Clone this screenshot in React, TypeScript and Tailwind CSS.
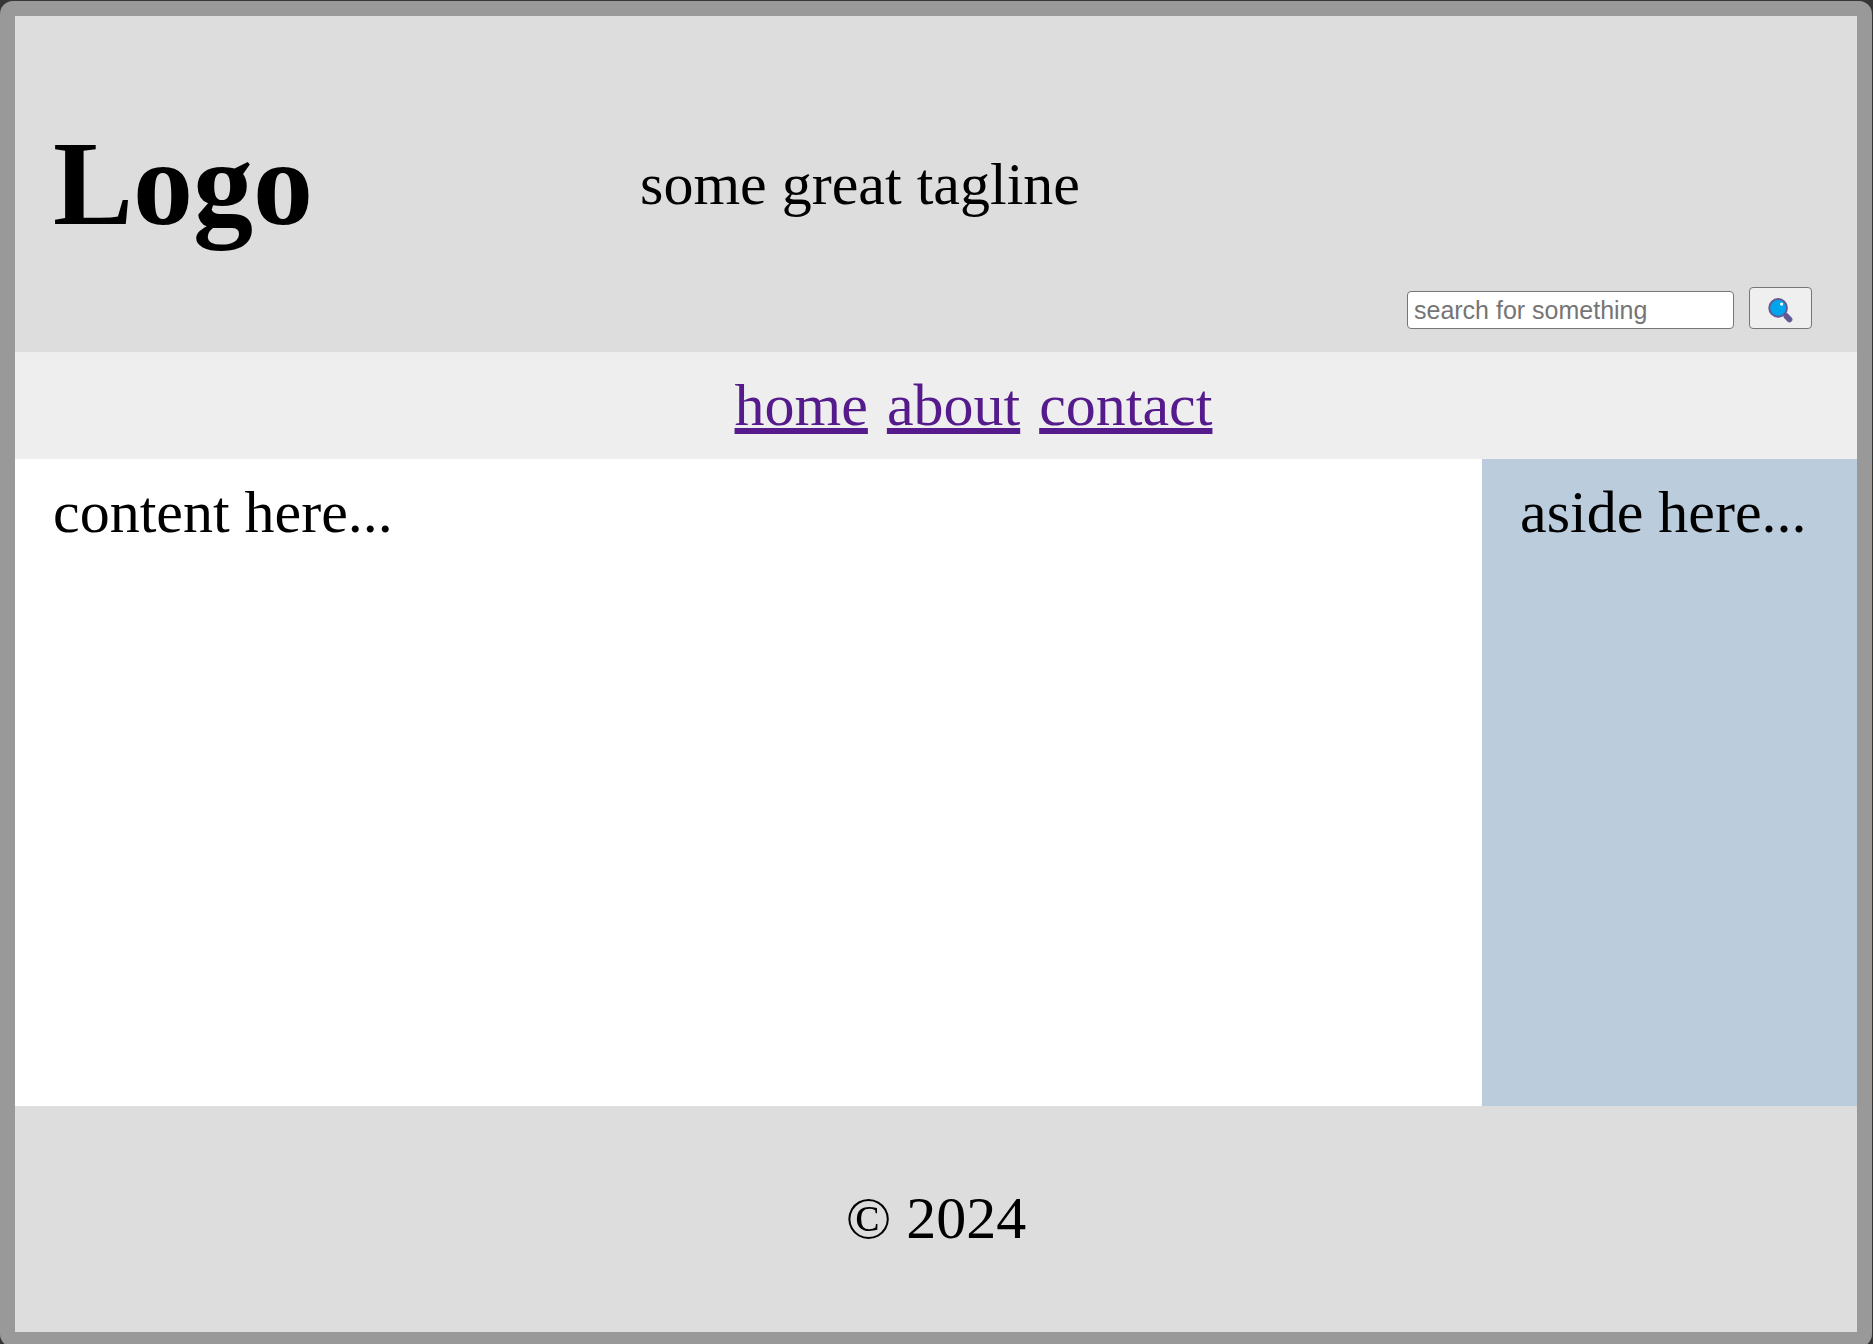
const links = ["home", "about", "contact"];

function SearchIcon() {
  return (
    <svg viewBox="0 0 25 25" className="size-[25px]" aria-hidden="true">
      <path d="M15.5 15.5l3 3" stroke="#635994" strokeWidth="2.6" />
      <path d="M18.4 18.2l3.1 3.3" stroke="#635994" strokeWidth="5.8" strokeLinecap="round" />
      <circle cx="10.1" cy="9.9" r="8.8" fill="#00a6ed" stroke="#635994" strokeWidth="2" />
      <circle cx="13.6" cy="6.1" r="1.6" fill="#fff" />
    </svg>
  );
}

export default function App() {
  return (
    <div className="h-screen overflow-hidden bg-[#363636] pt-px pr-px">
      <div className="flex h-[calc(100vh+2px)] flex-col rounded-[13px] border-[15px] border-[#999] bg-white font-['Liberation_Serif','Times_New_Roman',serif] text-[60px] leading-[69px] text-black">
        <header className="flex items-center justify-between bg-[#ddd] px-[38px] py-[19px]">
          <h1 className="my-20 text-[120px] leading-[138px] font-bold">Logo</h1>
          <p>some great tagline</p>
          <form
            className="mr-[7px] mb-1 flex items-end gap-[15px] self-end font-['Liberation_Sans',Arial,sans-serif] text-[25px] leading-[30px]"
            onSubmit={(e) => e.preventDefault()}
          >
            <input
              type="search"
              aria-label="search for something"
              placeholder="search for something"
              className="h-[38px] w-[327px] rounded-[4px] border border-[#767676] bg-white px-[6px] placeholder:text-[#757575]"
            />
            <button
              type="submit"
              aria-label="Search"
              className="flex h-[42px] w-[63px] items-center justify-center rounded-[4px] border border-[#767676] bg-[#efefef] pt-1"
            >
              <SearchIcon />
            </button>
          </form>
        </header>
        <nav className="bg-[#eee] px-[38px] py-[19px]">
          <ul className="flex justify-center gap-[19px] pl-[75px]">
            {links.map((link) => (
              <li key={link}>
                <a href={"#" + link} className="text-[#551a8b] underline decoration-[6px] underline-offset-[3px] [text-decoration-skip-ink:none]">
                  {link}
                </a>
              </li>
            ))}
          </ul>
        </nav>
        <div className="flex flex-1">
          <main className="flex-1 px-[38px] py-[19px]">content here...</main>
          <aside className="w-[375px] bg-[#bbccdd] px-[38px] py-[19px]">aside here...</aside>
        </div>
        <footer className="bg-[#ddd] px-[38px] pt-[78px] pb-[79px] text-center">
          <p>© 2024</p>
        </footer>
      </div>
    </div>
  );
}
